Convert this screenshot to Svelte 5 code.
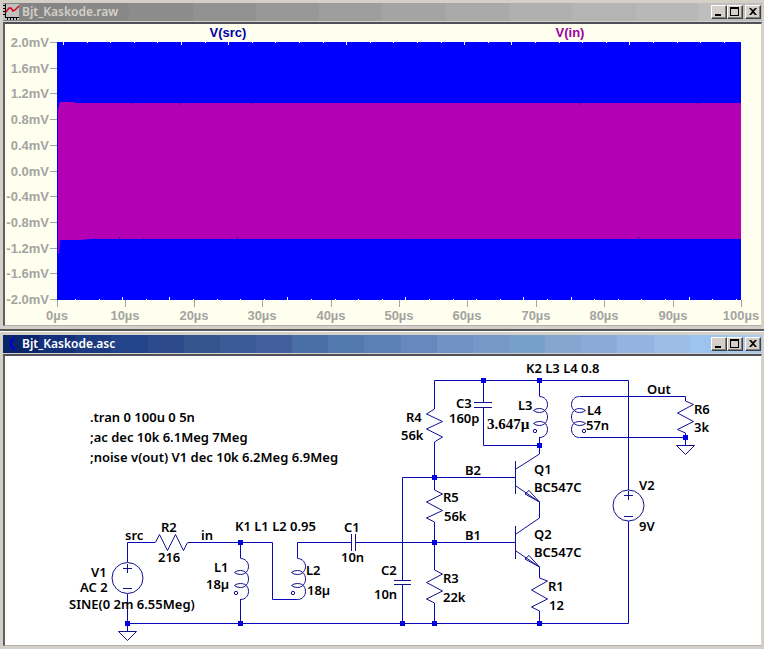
<script lang="ts">
    type Label = [number, number, string];

    const plot = { left: 57, right: 741, top: 42, bottom: 300 };
    const volts = ['2.0mV', '1.6mV', '1.2mV', '0.8mV', '0.4mV', '0.0mV', '-0.4mV', '-0.8mV', '-1.2mV', '-1.6mV', '-2.0mV'];
    const times = [0, 10, 20, 30, 40, 50, 60, 70, 80, 90, 100];

    const topMarks = Array.from({ length: 29 }, (_, i) => 63.5 + i * 23.6);
    const bottomMarks = Array.from({ length: 29 }, (_, i) => 75.5 + i * 23.6);
    const longTop = [0, 5, 7, 12, 17, 19, 24];
    const longBottom = [2, 4, 9, 14, 19, 21, 26];

    const grayBands = ['#848484', '#888888', '#8c8c8c', '#929292', '#989898', '#9e9e9e', '#a4a4a4', '#aaaaaa', '#b0b0b0', '#b4b4b4', '#b8b8b8', '#bebebe'];
    const blueBands = ['#0a246a', '#14307a', '#1c3a80', '#24448a', '#2c4a8c', '#34548e', '#3a5a98', '#42609e', '#4a6ea6', '#527aae', '#5c80b4', '#6688bc', '#7092c4', '#7698c8', '#76a0c8', '#86a6d0', '#8aaad8', '#94b4e0', '#9cbce6', '#9cc4ee', '#a6caf0'];

    function bands(colors: string[]) {
        const step = 100 / colors.length;
        return 'linear-gradient(to right, ' + colors.map((c, i) => `${c} ${i * step}% ${(i + 1) * step}%`).join(', ') + ')';
    }

    const wires = [
        // supply rail and V2
        'M434.5 409V380.5H628.5V490M628.5 521V623.5H127.5',
        // tank circuit C3 / L3
        'M483.5 380V402M483.5 408V445.5H539.5M539.5 380V396M539.5 437V454',
        // bias chain and base wires
        'M434.5 442V490M434.5 522V570M434.5 603V623M515 477.5H402.5V580M402.5 585V623',
        'M515 542.5H356M351 542.5H297.5V558M539.5 502V518M539.5 567V578M539.5 611V623',
        // output
        'M580 396.5H685.5V401M580 437.5H685.5M685.5 433V445',
        // input
        'M127.5 562V542.5H155M188 542.5H272.5V599.5H297.5M240.5 542V558M240.5 599V623M127.5 594V632'
    ];

    const parts = [
        // resistors R4 R5 R3 R1 R6 R2
        'M434.5 409L426.5 414L442.5 421.5L426.5 429L442.5 437L434.5 442',
        'M434.5 490L442.5 494L426.5 502L442.5 510.5L426.5 518L434.5 522',
        'M434.5 570L442.5 574L426.5 582.5L442.5 591L426.5 599L434.5 603',
        'M539.5 578L547.5 581L531.5 590L547.5 599L531.5 607L539.5 611',
        'M685.5 401L693.5 404.5L677.5 413L693.5 421.5L677.5 429.5L685.5 433',
        'M155.5 542.5L159.5 534.5L167.5 550.5L175.5 534.5L183.5 550.5L187.5 542.5',
        // capacitors C3 C2 C1
        'M474 402.5H492M474 407.5H492M394 580.5H411M394 584.5H411M351.5 534V551M355.5 534V551',
        // transistors
        'M515.5 461V494M539.5 454L516 469M516 486L539.5 502M525 494L529 490.5L539.5 502Z',
        'M515.5 526V559M539.5 518L516 534M516 551L539.5 567M525 559L529 555.5L539.5 567Z',
        // grounds
        'M676.5 445.5H694.5L685.5 454.5ZM118.5 631.5H136.5L127.5 640.5Z',
        // source polarity
        'M123 568.5H132M127.5 564V573M123 588.5H132M624 495.5H633M628.5 491V500M624 516.5H633'
    ];

    const coil = 'M0 0C5 0 8 4 8 8S5 16 0 16Q-4 16 -6 14Q-4 12 0 12C5 12 8 16 8 20.5S5 29 0 29Q-4 29 -6 27Q-4 25 0 25C6 25 8 29 8 33S5 41 0 41';
    const coils = [
        { x: 240.5, y: 558.5, flip: 1 },
        { x: 297.5, y: 558.5, flip: 1 },
        { x: 539.5, y: 396.5, flip: 1 },
        { x: 579.5, y: 396.5, flip: -1 }
    ];

    const nodes = [
        [483, 380], [539, 380], [539, 445], [434, 477], [434, 542], [240, 542], [685, 437],
        [127, 623], [240, 623], [402, 623], [434, 623], [539, 623]
    ];

    const labels: Label[] = [
        [90, 422, '.tran 0 100u 0 5n'],
        [90, 442, ';ac dec 10k 6.1Meg 7Meg'],
        [90, 462, ';noise v(out) V1 dec 10k 6.2Meg 6.9Meg'],
        [526, 373, 'K2 L3 L4 0.8'],
        [456, 408, 'C3'], [449, 423, '160p'], [518, 410, 'L3'],
        [406, 422, 'R4'], [401, 440, '56k'],
        [443, 502, 'R5'], [444, 521, '56k'],
        [465, 475, 'B2'], [465, 540, 'B1'],
        [534, 474, 'Q1'], [534, 492, 'BC547C'],
        [534, 539, 'Q2'], [534, 557, 'BC547C'],
        [381, 575, 'C2'], [374, 599, '10n'],
        [443, 583, 'R3'], [443, 602, '22k'],
        [548, 591, 'R1'], [549, 610, '12'],
        [587, 415, 'L4'], [586, 430, '57n'],
        [647, 394, 'Out'], [694, 414, 'R6'], [694, 432, '3k'],
        [639, 490, 'V2'], [639, 531, '9V'],
        [125, 540, 'src'], [161, 532, 'R2'], [158, 562, '216'], [201, 540, 'in'],
        [91, 577, 'V1'], [80, 592, 'AC 2'], [69, 609, 'SINE(0 2m 6.55Meg)'],
        [235, 531, 'K1 L1 L2 0.95'],
        [344, 532, 'C1'], [341, 562, '10n'],
        [214, 572, 'L1'], [206, 589, '18µ'],
        [306, 575, 'L2'], [307, 595, '18µ']
    ];
</script>

{#snippet controls()}
    <div class="controls">
        <button aria-label="Minimize">
            <svg width="12" height="10" viewBox="0 0 12 10"><path d="M2 7H8V9H2Z" /></svg>
        </button>
        <button aria-label="Maximize">
            <svg width="12" height="10" viewBox="0 0 12 10"><path fill-rule="evenodd" d="M1 0H10V9H1ZM2 2V8H9V2Z" /></svg>
        </button>
        <button class="close" aria-label="Close">
            <svg width="12" height="10" viewBox="0 0 12 10"><path d="M2 1H4L6 3L8 1H10L7 4.500L10 8H8L6 6L4 8H2L5 4.500Z" /></svg>
        </button>
    </div>
{/snippet}

<main>
    <section class="window">
        <header style="background-image: {bands(grayBands)}">
            <svg class="icon" width="16" height="16" viewBox="0 0 16 16">
                <path fill="#c0c0c0" d="M0 0H16V16H0Z" />
                <path stroke="#000" fill="none" d="M2.500 0V14M2 13.500H16M0 1.500H2M0 4.500H2M0 7.500H2M0 10.500H2M4.500 14V16M7.500 14V16M10.500 14V16M13.500 14V16" />
                <path stroke="#e00010" stroke-width="1.500" fill="none" d="M3 8L6 4L8 4L10 7L12 6L16 2" />
            </svg>
            <h2 class="inactive">Bjt_Kaskode.raw</h2>
            {@render controls()}
        </header>
        <div class="pane plot">
            <svg viewBox="5 24 756 301" role="img" aria-label="V(src) and V(in) over time">
                <text class="trace src" x="228" y="37">V(src)</text>
                <text class="trace in" x="570" y="37">V(in)</text>

                <rect x={plot.left} y={plot.top} width={plot.right - plot.left} height={plot.bottom - plot.top} fill="#0000ff" />
                <path fill="#b400b4" d="M58 253V109L60 102H74L76 103H741V239H90L80 240H60L59 253Z" />
                <path class="notch" d="M131.5 103V104M179.500 103V105M252.500 103V104M580.500 103V105M697.500 103V104M95.500 238V239M119.500 237V239M143.500 238V239M237.500 237V239M402.500 238V239M638.500 237V239" />

                {#each topMarks as x, i}
                    <path class="mark" d="M{Math.floor(x) + 0.5} {plot.top}v{longTop.includes(i) ? 3 : 1}" />
                {/each}
                {#each bottomMarks as x, i}
                    <path class="mark" d="M{Math.floor(x) + 0.5} {plot.bottom}v{longBottom.includes(i) ? -3 : -1}" />
                {/each}

                {#each volts as v, i}
                    {@const y = Math.round(plot.top + i * 25.7)}
                    <path class="tick" d="M50 {y + 0.5}H57" />
                    <text class="scale volt" x="49" y={y + 5}>{v}</text>
                {/each}
                {#each times as t, i}
                    {@const x = Math.round(plot.left + i * 68.4)}
                    <path class="tick" d="M{x + 0.5} 300V307" />
                    <text class="scale time" {x} y="320">{t}µs</text>
                {/each}
            </svg>
        </div>
    </section>

    <section class="window front">
        <header style="background-image: {bands(blueBands)}">
            <svg class="icon" width="16" height="16" viewBox="0 0 16 16">
                <path stroke="#0000e0" stroke-width="2" fill="none" d="M11 2L8 5V10L12 14" />
            </svg>
            <h2>Bjt_Kaskode.asc</h2>
            {@render controls()}
        </header>
        <div class="pane">
            <svg viewBox="5 356 756 289" role="img" aria-label="Cascode amplifier schematic">
                {#each wires as d}
                    <path class="wire" {d} />
                {/each}
                {#each parts as d}
                    <path class="part" {d} />
                {/each}
                {#each coils as c}
                    <g class="part" transform="translate({c.x} {c.y}) scale({c.flip} 1)">
                        <path d={coil} />
                        <circle cx="-4.500" cy="34.500" r="1.700" />
                    </g>
                {/each}
                <circle class="part" cx="127.500" cy="578" r="15.500" />
                <circle class="part" cx="628.500" cy="505.500" r="15.500" />
                {#each nodes as [x, y]}
                    <rect class="node" x={x - 2} y={y - 2} width="5" height="5" />
                {/each}
                {#each labels as [x, y, text]}
                    <text class="label" {x} {y}>{text}</text>
                {/each}
                <text class="label serif" x="487" y="429">3.647µ</text>
            </svg>
        </div>
    </section>
</main>

<style>
    :global(body) {
        margin: 0;
        background: #d4d0c8;
    }

    main {
        display: flex;
        flex-direction: column;
        font-family: "Noto Sans", "Open Sans", sans-serif;
    }

    .window {
        display: flex;
        flex-direction: column;
        gap: 1px;
        padding: 3px 2px 3px 3px;
        background: #d4d0c8;
        border-bottom: 2px solid #585858;
    }

    .window.front {
        border-top: 1px solid #ffffff;
        border-bottom: none;
    }

    header {
        display: flex;
        align-items: center;
        gap: 3px;
        height: 18px;
        padding-right: 1px;
    }

    .icon {
        flex: none;
    }

    h2 {
        flex: 1;
        margin: 0;
        font-size: 12px;
        line-height: 18px;
        font-weight: 600;
        color: #ffffff;
    }

    h2.inactive {
        color: #d4d0c8;
    }

    .controls {
        display: flex;
    }

    button {
        width: 16px;
        height: 14px;
        padding: 0;
        box-sizing: border-box;
        display: flex;
        align-items: center;
        justify-content: center;
        background: #d4d0c8;
        border: 1px solid;
        border-color: #ffffff #404040 #404040 #ffffff;
        box-shadow: inset -1px -1px 0 #808080;
        color: #000000;
    }

    button.close {
        margin-left: 2px;
    }

    button svg {
        flex: none;
        fill: #000000;
    }

    .pane {
        border-style: solid;
        border-width: 2px 1px 1px 2px;
        border-color: #50505a #d4d0c8 #b0b0b0 #606060;
        background: #ffffff;
    }

    .pane.plot {
        background: #fffff0;
    }

    .pane svg {
        display: block;
        width: 100%;
        height: auto;
    }

    .trace {
        font: bold 13px "Liberation Sans", Arial, sans-serif;
        text-anchor: middle;
    }

    .trace.src {
        fill: #0000a8;
    }

    .trace.in {
        fill: #a000a0;
    }

    .scale {
        font: bold 13px "Liberation Sans", Arial, sans-serif;
        fill: #a4a4a0;
    }

    .volt {
        text-anchor: end;
    }

    .time {
        text-anchor: middle;
    }

    .tick {
        stroke: #a4a4a0;
    }

    .mark {
        stroke: #ffffff;
    }

    .notch {
        stroke: #4000c0;
    }

    .wire {
        fill: none;
        stroke: #0808b8;
    }

    .part {
        fill: none;
        stroke: #101090;
    }

    .node {
        fill: #0000e0;
    }

    .label {
        font-size: 13px;
        font-weight: 600;
        fill: #000000;
    }

    .label.serif {
        font-family: "Liberation Serif", "Times New Roman", serif;
        font-size: 15px;
    }
</style>
